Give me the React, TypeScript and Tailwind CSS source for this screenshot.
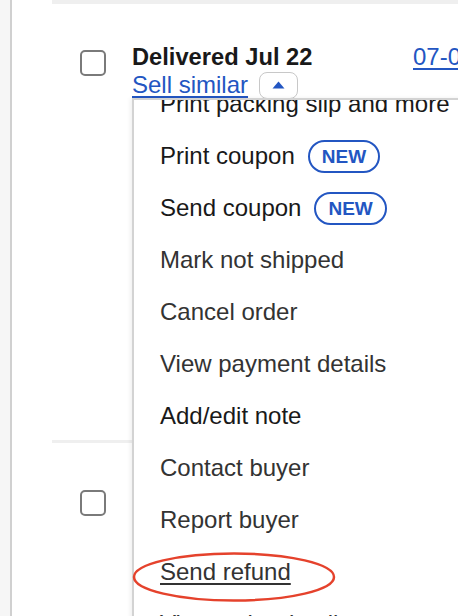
import React from "react";

const BLUE = "text-[#2356c2]";

const menuItems: { label: string; badge?: boolean; dark?: boolean; underline?: boolean }[] = [
  { label: "Print packing slip and more", dark: true },
  { label: "Print coupon", badge: true, dark: true },
  { label: "Send coupon", badge: true, dark: true },
  { label: "Mark not shipped" },
  { label: "Cancel order" },
  { label: "View payment details" },
  { label: "Add/edit note", dark: true },
  { label: "Contact buyer" },
  { label: "Report buyer" },
  { label: "Send refund", underline: true },
  { label: "View order details" },
];

function Checkbox() {
  return <div className="h-[26px] w-[26px] shrink-0 rounded-[5px] border-2 border-[#7a7a7a] bg-white" />;
}

function NewBadge() {
  return (
    <span className="ml-[13px] inline-flex h-[33px] items-center rounded-full border-2 border-[#2356c2] px-[12px] text-[19px] font-bold leading-none text-[#2356c2]">
      NEW
    </span>
  );
}

function ActionMenu() {
  return (
    <div className="absolute left-[132px] top-[98px] -right-[40px] -bottom-[80px] overflow-hidden border-l-2 border-t-2 border-[#d3d3d3] bg-white shadow-[-2px_0_4px_rgba(0,0,0,0.06)]">
      <ul className="-mt-[22px] pl-[26px]">
        {menuItems.map((item) => (
          <li
            key={item.label}
            className={`flex h-[52px] items-center whitespace-nowrap text-[24px] leading-[52px] ${
              item.dark ? "text-[#191919]" : "text-[#333333]"
            }`}
          >
            <span className={item.underline ? "underline decoration-[1.5px] underline-offset-[3px]" : ""}>
              {item.label}
            </span>
            {item.badge && <NewBadge />}
          </li>
        ))}
      </ul>
    </div>
  );
}

export default function App() {
  return (
    <div className="relative flex h-[616px] w-full overflow-hidden bg-white font-['Liberation_Sans',Arial,sans-serif]">
      <div className="w-[12px] shrink-0 border-r-2 border-[#d0d0d0] bg-[#f6f6f6]" />
      <main className="min-w-0 flex-1 pl-[40px]">
        <div className="h-[4px] bg-[#efefef]" />

        {/* order 1 */}
        <div className="flex h-[436px] pl-[28px] pt-[39px]">
          <div className="mr-[26px] mt-[7px]">
            <Checkbox />
          </div>
          <div className="w-[281px] shrink-0 text-[24px] leading-[28px]">
            <p className="text-[23.7px] font-bold text-[#191919]">Delivered Jul 22</p>
            <div className="flex items-center whitespace-nowrap">
              <a className={`${BLUE} underline decoration-[1.5px] underline-offset-[3px]`}>Sell similar</a>
              <button className="ml-[11px] inline-flex h-[27px] w-[39px] items-center justify-center rounded-[8px] border-[1.5px] border-[#c8c8c8] bg-white">
                <svg width="13" height="8" viewBox="0 0 13 8">
                  <path d="M6.5 0.5 L12.5 7.5 L0.5 7.5 Z" fill="#2356c2" />
                </svg>
              </button>
            </div>
          </div>
          <a className={`whitespace-nowrap text-[24px] leading-[28px] ${BLUE} underline decoration-[1.5px] underline-offset-[3px]`}>
            07-09512-38841
          </a>
        </div>

        <div className="h-[3px] bg-[#efefef]" />

        {/* order 2 */}
        <div className="flex pl-[28px] pt-[47px]">
          <Checkbox />
        </div>
      </main>

      <ActionMenu />

      <svg className="pointer-events-none absolute left-[132px] top-[552px]" width="206" height="52" viewBox="0 0 206 52">
        <ellipse cx="102" cy="25" rx="100" ry="23.5" fill="none" stroke="#e5422c" strokeWidth="2.5" />
      </svg>
    </div>
  );
}
